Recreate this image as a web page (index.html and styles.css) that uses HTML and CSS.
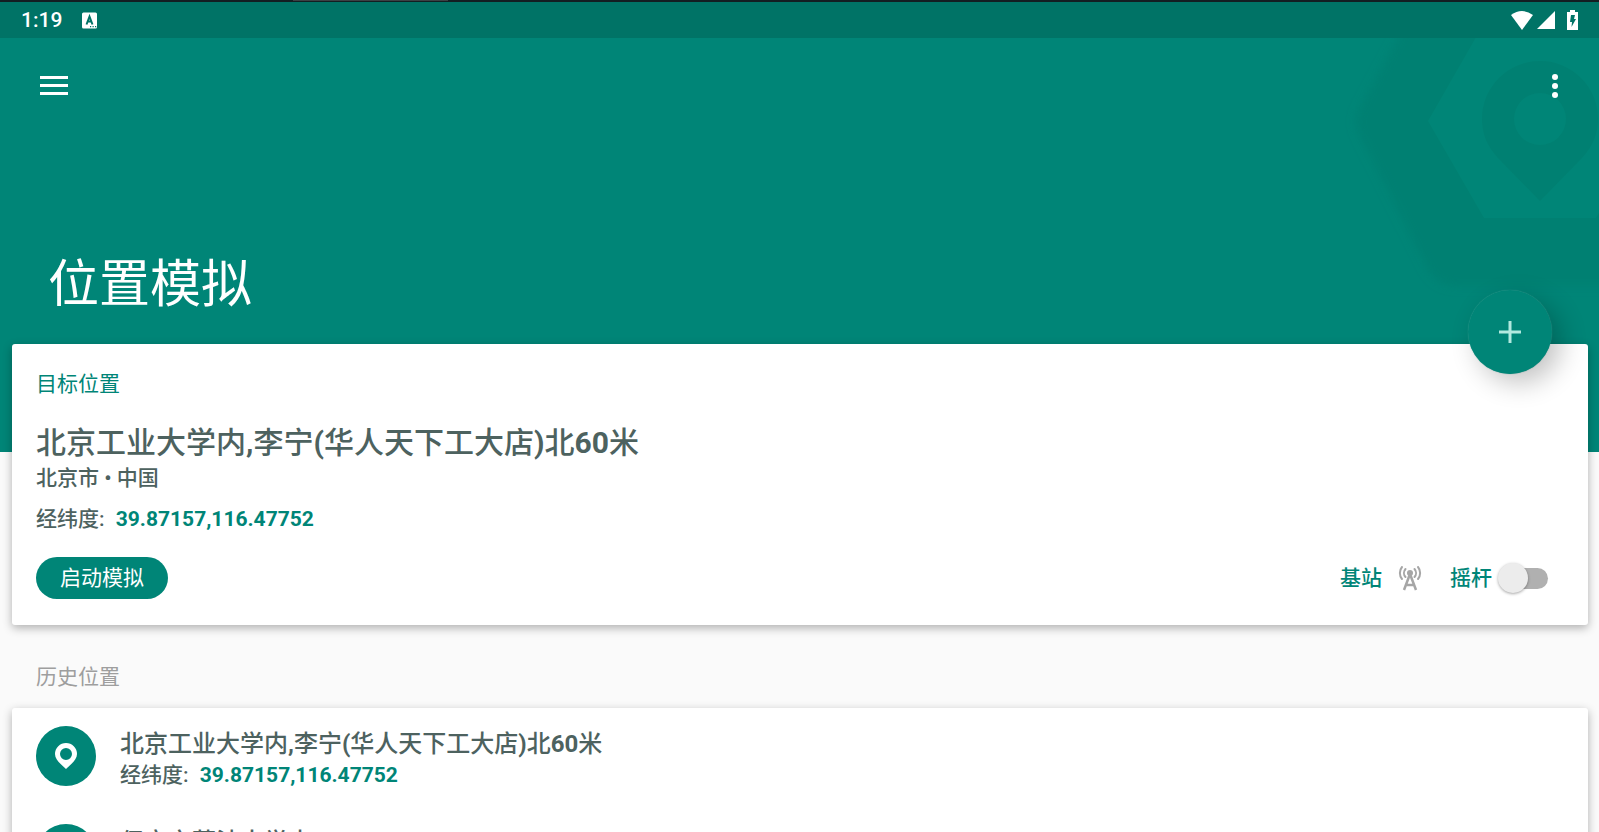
FILE: index.html
```html
<!DOCTYPE html>
<html lang="zh-CN">
<head>
	<meta charset="UTF-8">
	<meta name="viewport" content="width=device-width,initial-scale=1.0">
	<title>位置模拟</title>
	<link rel="stylesheet" href="styles.css">
</head>
<body>

<header class="header">
	<div class="window-edge"><span class="window-tab"></span></div>
	<div class="statusbar">
		<span class="clock">1:19</span>
		<svg class="ime" width="16" height="17" viewBox="0 0 16 17" aria-hidden="true">
			<path fill="#fff" fill-rule="evenodd" d="M1.500 .5h12a1.500 1.500 0 0 1 1.500 1.500v13a1.500 1.500 0 0 1-1.500 1.500h-12a1.500 1.500 0 0 1-1.500-1.500v-13a1.500 1.500 0 0 1 1.500-1.500z"/>
			<path fill="none" stroke="#007366" stroke-width="2" d="M4.500 12.500l3-8 3 8M5.500 9.500h4"/>
			<path fill="#007366" d="M8 14h1.200v1.200H8zM10.500 14h1.200v1.200h-1.200zM13 14h1.200v1.200H13z"/>
		</svg>
		<span class="system">
			<svg width="22" height="19" viewBox="0 0 22 19" aria-hidden="true"><path fill="#fff" d="M0 4Q11-4 22 4L11 19z"/></svg>
			<svg width="18" height="18" viewBox="0 0 18 18" aria-hidden="true"><path fill="#fff" d="M18 0v18H0z"/></svg>
			<svg class="battery" width="11" height="20" viewBox="0 0 11 20" aria-hidden="true">
				<path fill="#fff" d="M3 0h5v2h3v18H0V2h3z"/>
				<path fill="#007366" d="M4 5h4L7 9h2l-4.500 8L5 12H3z"/>
			</svg>
		</span>
	</div>
	<svg class="emblem" width="260" height="270" viewBox="0 0 260 270" aria-hidden="true">
		<defs>
			<filter id="soft"><feGaussianBlur stdDeviation="5"/></filter>
		</defs>
		<path class="emblem-dark" filter="url(#soft)" d="M75-30L20 72Q14 84 20 96L88 230Q98 248 118 248H300V-30z"/>
		<path class="emblem-light" d="M148-20L89 83l56 97h112l30-52V-20z"/>
		<path class="emblem-dark" fill-rule="evenodd" d="M201 23a58 58 0 0 1 58 58c0 16-6 28-16 39l-42 43-42-43c-10-11-16-23-16-39a58 58 0 0 1 58-58zM201 55a26 26 0 1 0 0 52 26 26 0 0 0 0-52z"/>
	</svg>
	<nav class="toolbar">
		<button class="icon-btn" type="button" aria-label="菜单">
			<svg width="28" height="20" viewBox="0 0 28 20"><path fill="#fff" d="M0 0h28v3H0zM0 8h28v3H0zM0 16h28v3H0z"/></svg>
		</button>
		<button class="icon-btn" type="button" aria-label="更多">
			<svg width="6" height="24" viewBox="0 0 6 24"><g fill="#fff"><circle cx="3" cy="3" r="3"/><circle cx="3" cy="12" r="3"/><circle cx="3" cy="21" r="3"/></g></svg>
		</button>
	</nav>
	<h1>位置模拟</h1>
</header>

<main>
	<section class="card target">
		<button class="fab" type="button" aria-label="添加">
			<svg width="22" height="22" viewBox="0 0 22 22"><path stroke="#b2e9df" stroke-width="3" d="M11 0v22M0 11h22"/></svg>
		</button>
		<h2>目标位置</h2>
		<p class="place">北京工业大学内<b>,</b>李宁<b>(</b>华人天下工大店<b>)</b>北<b>60</b>米</p>
		<p class="city">北京市 • 中国</p>
		<p class="coords">经纬度: <b>39.87157,116.47752</b></p>
		<div class="actions">
			<button class="start" type="button">启动模拟</button>
			<button class="station" type="button">基站
				<svg width="24" height="26" viewBox="0 0 24 26" fill="none" stroke="#a6a6a6" stroke-width="2">
					<circle cx="12" cy="8" r="3" fill="#a6a6a6" stroke="none"/>
					<path stroke-linecap="round" d="M7.500 4a6 6 0 0 0 0 8M16.500 4a6 6 0 0 1 0 8M4 2a9.500 9.500 0 0 0 0 12M20 2a9.500 9.500 0 0 1 0 12"/>
					<path stroke-width="2.500" d="M12 9L6 25M12 9l6 16M8 20h8"/>
				</svg>
			</button>
			<label class="joystick">摇杆 <input type="checkbox" role="switch"></label>
		</div>
	</section>

	<h2 class="history-title">历史位置</h2>
	<ul class="card history">
		<li>
			<span class="pin"><svg width="22" height="26" viewBox="0 0 22 26" aria-hidden="true"><path fill="#fff" fill-rule="evenodd" d="M11 0a11 11 0 0 1 11 11c0 6-6 10-11 15C6 21 0 17 0 11A11 11 0 0 1 11 0zm0 5a6 6 0 1 0 0 12 6 6 0 0 0 0-12z"/></svg></span>
			<div>
				<p class="name">北京工业大学内<b>,</b>李宁<b>(</b>华人天下工大店<b>)</b>北<b>60</b>米</p>
				<p class="coords">经纬度: <b>39.87157,116.47752</b></p>
			</div>
		</li>
		<li>
			<span class="pin"><svg width="22" height="26" viewBox="0 0 22 26" aria-hidden="true"><path fill="#fff" fill-rule="evenodd" d="M11 0a11 11 0 0 1 11 11c0 6-6 10-11 15C6 21 0 17 0 11A11 11 0 0 1 11 0zm0 5a6 6 0 1 0 0 12 6 6 0 0 0 0-12z"/></svg></span>
			<div>
				<p class="name">保定市莲池大学内</p>
			</div>
		</li>
	</ul>
</main>

</body>
</html>
```

FILE: styles.css
```css
* {box-sizing: border-box;}
html {
	height: 100%;
	overflow: hidden;
}
body {
	background: #FAFAFA;
	color: #4D625F;
	font-family: Roboto, "Noto Sans CJK SC", sans-serif;
	font-size: 21px;
	height: 100%;
	line-height: 30px;
	margin: 0;
	overflow: hidden;
}
h1, h2, p, ul {
	margin: 0;
	padding: 0;
}
button {
	background: none;
	border: 0;
	color: inherit;
	cursor: pointer;
	font: inherit;
	padding: 0;
}
svg {display: block;}

/* header */
.header {
	background: #008577;
	color: #FFF;
	height: 452px;
	overflow: hidden;
	position: relative;
}
.window-edge {
	background: #131E22;
	display: flex;
	height: 2px;
	padding-left: 18.3%;
}
.window-tab {
	background: #3C4043;
	height: 1px;
	width: 155px;
}
.statusbar {
	align-items: center;
	background: #007366;
	display: flex;
	font-weight: 500;
	gap: 20px;
	height: 36px;
	padding: 0 21px;
}
.system {
	align-items: center;
	display: flex;
	gap: 4px;
	margin-left: auto;
}
.battery {margin-left: 8px;}
.emblem {
	position: absolute;
	right: 0;
	top: 38px;
}
.emblem-dark {fill: #008072;}
.emblem-light {fill: #008577;}
.toolbar {
	display: flex;
	justify-content: space-between;
	padding: 24px 20px;
	position: relative;
}
.icon-btn {
	align-items: center;
	display: flex;
	height: 48px;
	justify-content: center;
	width: 68px;
}
.icon-btn:last-child {width: 48px;}
h1 {
	font-size: 51px;
	font-weight: 400;
	line-height: 60px;
	padding: 121px 48px 0;
}

/* cards */
main {
	margin-top: -108px;
	padding: 0 11px 0 12px;
	position: relative;
}
.card {
	background: #FFF;
	border-radius: 3px;
	box-shadow: 0 3px 10px rgba(0,0,0,.3);
}
.target {
	padding: 25px 24px 26px;
	position: relative;
}
.fab {
	align-items: center;
	background: #008577;
	border-radius: 50%;
	box-shadow: 9px 9px 27px rgba(0,0,0,.24), 0 0 1px #4DAA9F;
	display: flex;
	height: 84px;
	justify-content: center;
	position: absolute;
	right: 36px;
	top: -54px;
	width: 84px;
}
h2 {
	color: #008577;
	font-size: 21px;
	font-weight: 400;
}
.place {
	font-size: 30px;
	font-weight: 500;
	line-height: 40px;
	padding-top: 24px;
}
.city {
	font-weight: 500;
	padding-bottom: 11px;
}
.coords {font-weight: 500;}
.coords b {
	color: #008577;
	font-weight: 700;
	margin-left: 6px;
}
.actions {
	align-items: center;
	color: #008577;
	display: flex;
	font-weight: 500;
	padding-top: 23px;
}
.start {
	background: #008577;
	border-radius: 21px;
	color: #FFF;
	font-weight: 400;
	height: 42px;
	padding: 0 24px;
}
.station {
	align-items: center;
	display: flex;
	gap: 16px;
	margin-left: auto;
}
.joystick {
	align-items: center;
	display: flex;
	gap: 6px;
	margin: 0 16px 0 28px;
}
.joystick input {
	appearance: none;
	align-items: center;
	display: flex;
	height: 30px;
	margin: 0;
	width: 50px;
}
.joystick input::before {
	background: #ECECEC;
	border-radius: 50%;
	box-shadow: 0 1px 3px rgba(0,0,0,.35);
	content: "";
	height: 30px;
	width: 30px;
	z-index: 1;
}
.joystick input::after {
	background: #B0B0B0;
	border-radius: 11px;
	content: "";
	height: 21px;
	margin-left: -20px;
	width: 40px;
}
.history-title {
	color: #9E9E9E;
	padding: 37px 24px 16px;
}
.history {list-style: none;}
.history li {
	display: flex;
	gap: 24px;
	height: 98px;
	padding: 18px 24px;
}
.history .coords {line-height: 26px;}
.pin {
	align-items: center;
	background: #008577;
	border-radius: 50%;
	display: flex;
	height: 60px;
	justify-content: center;
	width: 60px;
}
.name {
	font-size: 24px;
	font-weight: 500;
	line-height: 36px;
}
```
